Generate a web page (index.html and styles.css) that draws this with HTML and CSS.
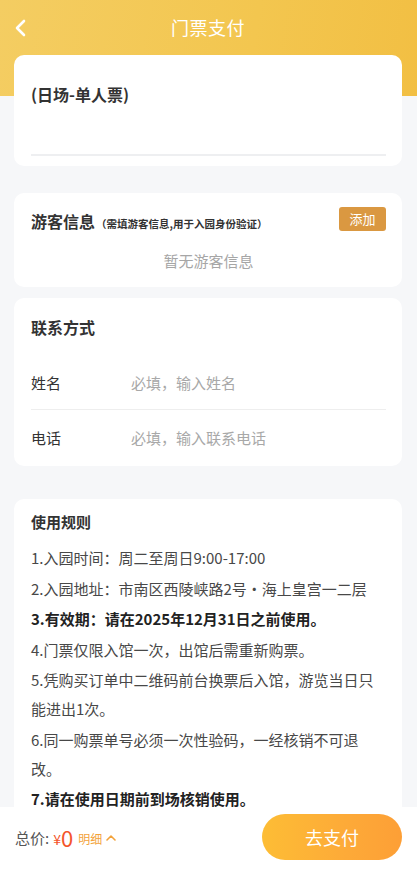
FILE: index.html
```html
<!DOCTYPE html>
<html lang="zh">
<head>
<meta charset="utf-8">
<title>门票支付</title>
<link rel="stylesheet" href="styles.css">
</head>
<body>
<div class="page">
  <header class="nav">
    <svg class="back" width="12" height="18" viewBox="0 0 12 18"><path d="M10 2 L3 9 L10 16" fill="none" stroke="#fff" stroke-width="2.6" stroke-linecap="round" stroke-linejoin="round"/></svg>
    <h1 class="nav-title">门票支付</h1>
  </header>

  <section class="card ticket">
    <div class="ticket-name">(日场-单人票)</div>
    <div class="ticket-line"></div>
  </section>

  <section class="card visitor">
    <div class="visitor-head">
      <div class="visitor-title">游客信息<span class="visitor-sub">（需填游客信息,用于入园身份验证）</span></div>
      <button class="add-btn">添加</button>
    </div>
    <div class="empty">暂无游客信息</div>
  </section>

  <section class="card contact">
    <div class="card-title">联系方式</div>
    <div class="field"><span class="field-label">姓名</span><span class="field-input">必填，输入姓名</span></div>
    <div class="field"><span class="field-label">电话</span><span class="field-input">必填，输入联系电话</span></div>
  </section>

  <section class="card rules">
    <div class="rules-title">使用规则</div>
    <p class="rule">1.入园时间：周二至周日9:00-17:00</p>
    <p class="rule">2.入园地址：市南区西陵峡路2号・海上皇宫一二层</p>
    <p class="rule strong">3.有效期：请在2025年12月31日之前使用。</p>
    <p class="rule">4.门票仅限入馆一次，出馆后需重新购票。</p>
    <p class="rule">5.凭购买订单中二维码前台换票后入馆，游览当日只<br>能进出1次。</p>
    <p class="rule">6.同一购票单号必须一次性验码，一经核销不可退<br>改。</p>
    <p class="rule strong">7.请在使用日期前到场核销使用。</p>
  </section>
</div>

<footer class="paybar">
  <div class="total">
    <span class="total-label">总价:</span>
    <span class="yen">¥</span><span class="amount">0</span>
    <span class="detail">明细</span>
    <svg class="up" width="10" height="7" viewBox="0 0 10 7"><path d="M1 6 L5 2 L9 6" fill="none" stroke="#f3a23a" stroke-width="1.6" stroke-linecap="round" stroke-linejoin="round"/></svg>
  </div>
  <button class="pay-btn">去支付</button>
</footer>
</body>
</html>
```

FILE: styles.css
```css
* { box-sizing: border-box; }
html, body {
  margin: 0;
  padding: 0;
  height: 100%;
  overflow: hidden;
}
body {
  font-family: "Noto Sans CJK SC", "Noto Sans", sans-serif;
  color: #333;
  background: #f6f7f9;
}
.page {
  height: 100%;
  overflow: hidden;
  padding: 0 15px 0 14px;
  background: linear-gradient(100deg, #f4cd62 0%, #f3c64f 60%, #f2bf43 100%) top left / 100% 96px no-repeat, #f6f7f9;
}
.nav {
  height: 55px;
  display: flex;
  align-items: center;
  justify-content: center;
  position: relative;
}
.back {
  position: absolute;
  left: 0;
  top: 19px;
}
.nav-title {
  margin: 0 0 2px 0;
  font-size: 18px;
  font-weight: 400;
  color: #fff;
  line-height: 1;
  letter-spacing: 0.5px;
}
.card {
  background: #fff;
  border-radius: 10px;
  padding: 0 16px 0 17px;
}
.ticket {
  padding-top: 27px;
  padding-bottom: 10px;
}
.ticket-name {
  font-size: 16px;
  font-weight: 700;
  line-height: 24px;
  color: #333;
}
.ticket-line {
  margin-top: 48px;
  height: 2px;
  background: #eeeff1;
}
.visitor {
  margin-top: 27px;
  padding-top: 14px;
  padding-bottom: 15px;
}
.visitor-head {
  display: flex;
  justify-content: space-between;
  align-items: flex-start;
  height: 24px;
}
.visitor-title {
  font-size: 16px;
  font-weight: 700;
  line-height: 20px;
  padding-top: 4px;
  color: #333;
  white-space: nowrap;
}
.visitor-sub {
  font-size: 10.5px;
  font-weight: 700;
  margin-left: 1px;
}
.add-btn {
  width: 47px;
  height: 24px;
  border: none;
  border-radius: 3px;
  background: #da9841;
  color: #fff;
  font-family: inherit;
  font-size: 13px;
  padding: 0;
  line-height: 24px;
}
.empty {
  margin-top: 19px;
  text-align: center;
  font-size: 15px;
  line-height: 22px;
  color: #a6a6a6;
}
.contact {
  margin-top: 11px;
  padding-top: 17px;
  padding-bottom: 1px;
}
.card-title {
  font-size: 16px;
  font-weight: 700;
  line-height: 24px;
  margin-bottom: 16px;
}
.field {
  height: 54px;
  display: flex;
  align-items: center;
  font-size: 15px;
}
.field + .field {
  border-top: 1px solid #eeeeee;
  height: 56px;
}
.field-label {
  width: 100px;
  color: #333;
}
.field-input {
  color: #a8a8a8;
}
.rules {
  margin-top: 33px;
  padding-top: 12px;
  padding-bottom: 40px;
}
.rules-title {
  font-size: 15px;
  font-weight: 700;
  line-height: 22px;
  margin-bottom: 10px;
  color: #333;
}
.rule {
  margin: 0 0 1.5px 0;
  font-size: 15px;
  line-height: 29px;
  color: #484848;
}
.rule.strong {
  font-weight: 700;
  color: #222;
}
.paybar {
  position: fixed;
  left: 0;
  right: 0;
  bottom: 0;
  height: 75px;
  background: #fff;
  display: flex;
  justify-content: space-between;
  align-items: flex-start;
  padding: 7px 15px 0 15px;
}
.total {
  height: 46px;
  display: flex;
  align-items: center;
  line-height: 1;
}
.total-label {
  font-size: 15px;
  color: #555;
  margin-right: 4px;
  line-height: 1;
}
.yen {
  font-size: 14px;
  color: #f4552b;
  margin-top: 3px;
  line-height: 1;
}
.amount {
  font-size: 22px;
  color: #f4552b;
  line-height: 1;
  margin-right: 5px;
}
.detail {
  font-size: 12px;
  color: #f3a23a;
  margin-top: 3px;
  margin-right: 4px;
  line-height: 1;
}
.up { margin-top: 1px; }
.pay-btn {
  width: 140px;
  height: 46px;
  border: none;
  border-radius: 23px;
  background: linear-gradient(90deg, #fdbd35 0%, #fdaa38 60%, #fd9f36 100%);
  color: #fff;
  font-family: inherit;
  font-size: 18px;
  padding: 0;
}
```
